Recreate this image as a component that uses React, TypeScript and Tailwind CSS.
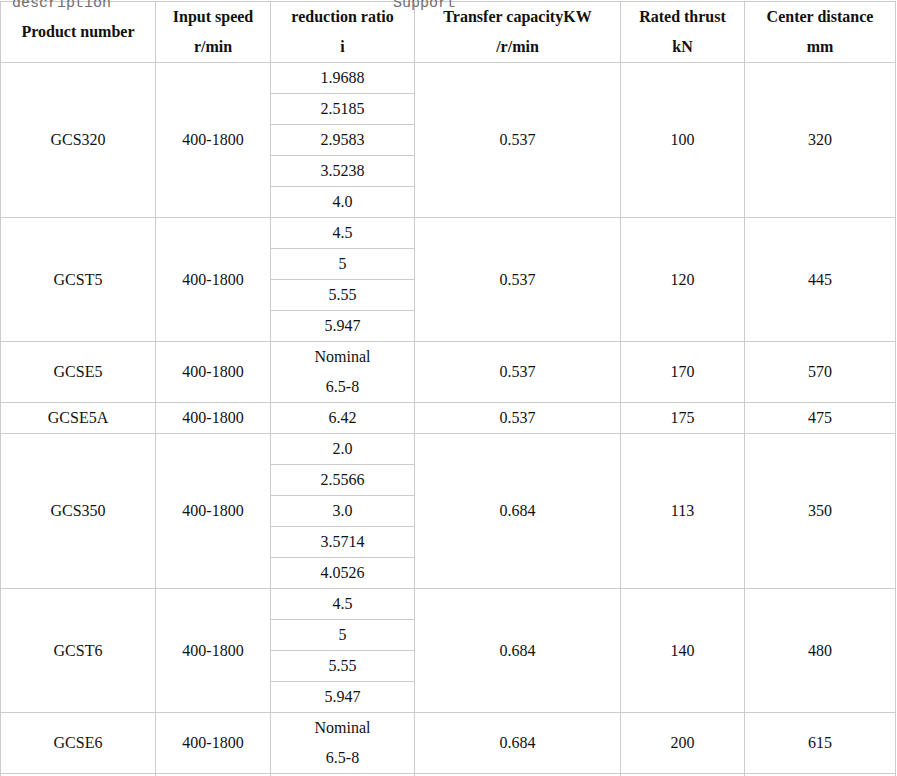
import React from 'react';

type Group = {
  name: string;
  speed: string;
  ratios: string[][];
  capacity: string;
  thrust: string;
  distance: string;
};

const groups: Group[] = [
  { name: 'GCS320', speed: '400-1800', ratios: [['1.9688'], ['2.5185'], ['2.9583'], ['3.5238'], ['4.0']], capacity: '0.537', thrust: '100', distance: '320' },
  { name: 'GCST5', speed: '400-1800', ratios: [['4.5'], ['5'], ['5.55'], ['5.947']], capacity: '0.537', thrust: '120', distance: '445' },
  { name: 'GCSE5', speed: '400-1800', ratios: [['Nominal', '6.5-8']], capacity: '0.537', thrust: '170', distance: '570' },
  { name: 'GCSE5A', speed: '400-1800', ratios: [['6.42']], capacity: '0.537', thrust: '175', distance: '475' },
  { name: 'GCS350', speed: '400-1800', ratios: [['2.0'], ['2.5566'], ['3.0'], ['3.5714'], ['4.0526']], capacity: '0.684', thrust: '113', distance: '350' },
  { name: 'GCST6', speed: '400-1800', ratios: [['4.5'], ['5'], ['5.55'], ['5.947']], capacity: '0.684', thrust: '140', distance: '480' },
  { name: 'GCSE6', speed: '400-1800', ratios: [['Nominal', '6.5-8']], capacity: '0.684', thrust: '200', distance: '615' },
  { name: 'GCSE6A', speed: '400-1800', ratios: [['6.42']], capacity: '0.684', thrust: '205', distance: '520' },
];

const td = 'border border-[#cccccc] p-0 text-center align-middle leading-[30px]';

function Lines({ lines }: { lines: string[] }) {
  return (
    <>
      {lines.map((l) => (
        <div key={l}>{l}</div>
      ))}
    </>
  );
}

export default function App() {
  return (
    <div className="relative bg-white overflow-hidden pt-px text-[16px] text-[#111] [font-family:Liberation_Serif,Times_New_Roman,serif]">
      <table className="table-fixed border-collapse w-[895px]">
        <colgroup>
          <col className="w-[155px]" />
          <col className="w-[115px]" />
          <col className="w-[144px]" />
          <col className="w-[206px]" />
          <col className="w-[124px]" />
          <col className="w-[151px]" />
        </colgroup>
        <thead>
          <tr className="font-bold">
            <td className={td}>Product number</td>
            <td className={td}><Lines lines={['Input speed', 'r/min']} /></td>
            <td className={td}><Lines lines={['reduction ratio', 'i']} /></td>
            <td className={td}><Lines lines={['Transfer capacityKW', '/r/min']} /></td>
            <td className={td}><Lines lines={['Rated thrust', 'kN']} /></td>
            <td className={td}><Lines lines={['Center distance', 'mm']} /></td>
          </tr>
        </thead>
        <tbody>
          {groups.map((g) =>
            g.ratios.map((r, i) => (
              <tr key={g.name + i}>
                {i === 0 && (
                  <>
                    <td className={td} rowSpan={g.ratios.length}>{g.name}</td>
                    <td className={td} rowSpan={g.ratios.length}>{g.speed}</td>
                  </>
                )}
                <td className={td}><Lines lines={r} /></td>
                {i === 0 && (
                  <>
                    <td className={td} rowSpan={g.ratios.length}>{g.capacity}</td>
                    <td className={td} rowSpan={g.ratios.length}>{g.thrust}</td>
                    <td className={td} rowSpan={g.ratios.length}>{g.distance}</td>
                  </>
                )}
              </tr>
            ))
          )}
        </tbody>
      </table>

      {/* clipped tab labels above the table */}
      <span className="absolute left-[12px] top-[-4px] text-[15px] leading-[15px] text-[#6f6f6f] [font-family:Liberation_Mono,Courier_New,monospace]">
        description
      </span>
      <span className="absolute left-[393px] top-[-4px] text-[15px] leading-[15px] text-[#6f6f6f] [font-family:Liberation_Mono,Courier_New,monospace]">
        Support
      </span>
    </div>
  );
}
